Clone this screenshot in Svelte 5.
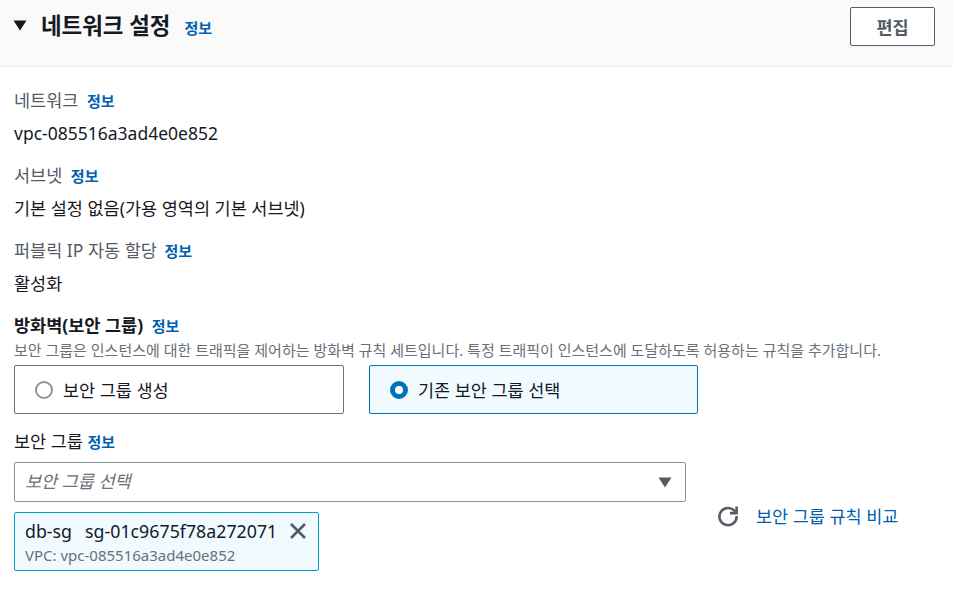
<script>
  const info = '정보';
</script>

<div class="page">
  <header class="head">
    <div class="title">
      <svg class="caret" width="14" height="12" viewBox="0 0 14 12"><path d="M0.5 1.5h13L7 11.5z" fill="#16191f"/></svg>
      <h2>네트워크 설정</h2>
      <a class="info">{info}</a>
    </div>
    <button class="edit">편집</button>
  </header>

  <section class="body">
    <div class="field f1">
      <div class="label muted">네트워크 <a class="info gap">{info}</a></div>
      <div class="value">vpc-085516a3ad4e0e852</div>
    </div>
    <div class="field f2">
      <div class="label muted">서브넷 <a class="info gap">{info}</a></div>
      <div class="value">기본 설정 없음(가용 영역의 기본 서브넷)</div>
    </div>
    <div class="field f3">
      <div class="label muted">퍼블릭 IP 자동 할당 <a class="info gap tight">{info}</a></div>
      <div class="value">활성화</div>
    </div>

    <div class="fw">
      <div class="label strong">방화벽(보안 그룹) <a class="info gap">{info}</a></div>
      <p class="desc">보안 그룹은 인스턴스에 대한 트래픽을 제어하는 방화벽 규칙 세트입니다. 특정 트래픽이 인스턴스에 도달하도록 허용하는 규칙을 추가합니다.</p>
    </div>

    <div class="tiles">
      <div class="tile">
        <span class="radio"></span>
        <span>보안 그룹 생성</span>
      </div>
      <div class="tile on">
        <span class="radio checked"></span>
        <span>기존 보안 그룹 선택</span>
      </div>
    </div>

    <div class="label sg">보안 그룹 <a class="info">{info}</a></div>

    <div class="row">
      <div class="left">
        <div class="select">
          <span class="ph">보안 그룹 선택</span>
          <svg width="14" height="11" viewBox="0 0 14 11"><path d="M0.5 0.5h13L7 10.5z" fill="#545b64"/></svg>
        </div>
        <div class="token">
          <div class="tokentext">
            <div class="tokenmain"><span>db-sg</span><span>sg-01c9675f78a272071</span></div>
            <div class="tokensub">VPC: vpc-085516a3ad4e0e852</div>
          </div>
          <svg class="x" width="18" height="18" viewBox="0 0 18 18"><path d="M2 2l14 14M16 2L2 16" stroke="#545b64" stroke-width="2.6" fill="none"/></svg>
        </div>
      </div>
      <div class="compare">
        <svg width="22" height="22" viewBox="0 0 22 22" fill="none" stroke="#545b64" stroke-width="2.6"><path d="M18.4 7.2A8.6 8.6 0 1 0 19.6 11"/><path d="M19.6 1.5v6.6H13" /></svg>
        <a class="link">보안 그룹 규칙 비교</a>
      </div>
    </div>
  </section>
</div>

<style>
  :global(body) {
    margin: 0;
    background: #fff;
    font-family: "Noto Sans", "Noto Sans CJK KR", sans-serif;
    color: #16191f;
  }
  .page { width: 953px; height: 590px; overflow: hidden; }
  .head {
    height: 67px;
    box-sizing: border-box;
    background: #fafafa;
    border-bottom: 1px solid #eaeded;
    display: flex;
    justify-content: space-between;
    align-items: flex-start;
    padding: 7px 18px 0 13px;
  }
  .title { display: flex; align-items: center; height: 39px; }
  .caret { margin-right: 14px; margin-top: -3px; }
  h2 { margin: -2px 14px 0 0; font-size: 22.4px; font-weight: 700; line-height: 38px; }
  .info { color: #0060b0; font-size: 15px; font-weight: 700; }
  .title .info { margin-top: 1px; }
  .edit {
    width: 85px;
    height: 39px;
    box-sizing: border-box;
    background: #fff;
    border: 1px solid #545b64;
    border-radius: 2px;
    font: 700 17.5px "Noto Sans", "Noto Sans CJK KR", sans-serif;
    color: #545b64;
    padding: 0;
  }
  .body { padding: 0 14px; }
  .label { font-size: 17.5px; line-height: 24px; }
  .muted { color: #545b64; }
  .gap { margin-left: 4px; }
  .tight { margin-left: 3px; }
  .value { font-size: 17.5px; line-height: 24px; }
  .field { display: flex; flex-direction: column; gap: 8px; }
  .f1 { padding-top: 21px; }
  .f2 { padding-top: 18px; }
  .f3 { padding-top: 18px; }
  .fw { padding-top: 18px; }
  .strong { font-weight: 700; color: #16191f; }
  .desc { margin: 4px 0 0; font-size: 15px; line-height: 17px; color: #687078; white-space: nowrap; }
  .tiles { display: flex; gap: 25px; margin-top: 6px; }
  .tile {
    width: 330px;
    height: 49px;
    box-sizing: border-box;
    border: 1px solid #687078;
    border-radius: 2px;
    display: flex;
    align-items: center;
    gap: 10px;
    padding-left: 20px;
    font-size: 17.5px;
  }
  .tile.on { width: 329px; background: #f1faff; border-color: #0073bb; }
  .radio {
    width: 18px;
    height: 18px;
    box-sizing: border-box;
    border: 2px solid #879596;
    border-radius: 50%;
    background: #fff;
  }
  .radio.checked { border: 5px solid #0073bb; }
  .sg { margin-top: 15px; }
  .row { display: flex; margin-top: 8px; align-items: flex-start; }
  .left { width: 672px; }
  .select {
    height: 40px;
    box-sizing: border-box;
    border: 1px solid #879596;
    border-radius: 2px;
    display: flex;
    align-items: center;
    justify-content: space-between;
    padding: 0 13px 0 10px;
  }
  .ph { font-style: italic; color: #687078; font-size: 17.5px; margin-bottom: 3px; }
  .token {
    margin-top: 10px;
    width: 305px;
    height: 59px;
    box-sizing: border-box;
    background: #f1faff;
    border: 1px solid #00a1c9;
    border-radius: 2px;
    display: flex;
    justify-content: space-between;
    padding: 6px 11px 0 10px;
  }
  .tokenmain { display: flex; gap: 13px; font-size: 17.8px; line-height: 24px; margin-bottom: 3px; }
  .tokensub { font-size: 15px; line-height: 18px; color: #687078; }
  .x { margin-top: 3px; }
  .compare { display: flex; align-items: center; gap: 17px; margin: 41px 0 0 31px; }
  .link { color: #0060b0; font-size: 17.5px; }
</style>
